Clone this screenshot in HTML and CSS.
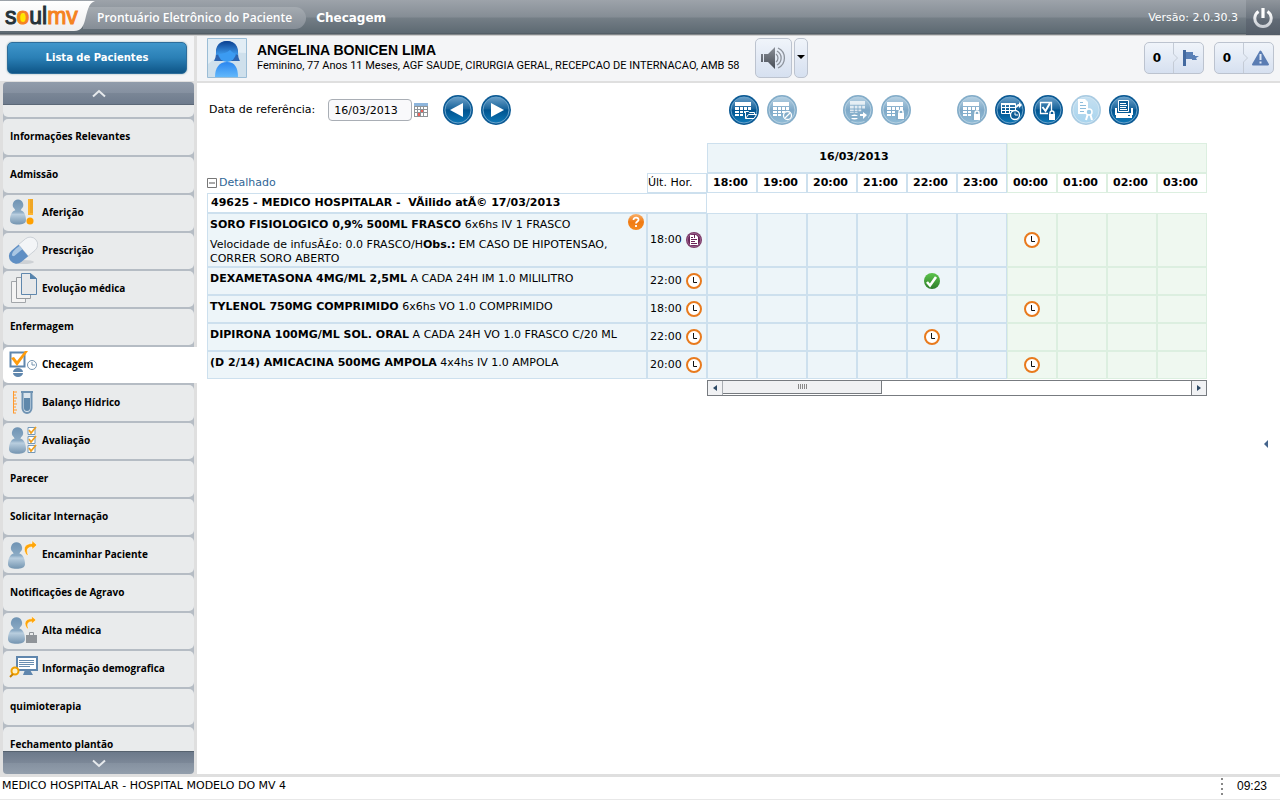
FILE: index.html
```html
<!DOCTYPE html>
<html lang="pt-BR">
<head>
<meta charset="utf-8">
<title>Prontuário Eletrônico do Paciente - Checagem</title>
<link rel="stylesheet" href="styles.css">
</head>
<body>
<svg class="defs" width="0" height="0" aria-hidden="true">
  <defs>
    <linearGradient id="gBlue" x1="0" y1="0" x2="0" y2="1"><stop offset="0" stop-color="#6a9fc8"/><stop offset=".45" stop-color="#1a659c"/><stop offset=".5" stop-color="#00538f"/><stop offset="1" stop-color="#0d77b6"/></linearGradient>
    <linearGradient id="gPale" x1="0" y1="0" x2="0" y2="1"><stop offset="0" stop-color="#b5d0e2"/><stop offset=".5" stop-color="#7fa9c8"/><stop offset="1" stop-color="#8fbbd6"/></linearGradient>
    <linearGradient id="gSky" x1="0" y1="0" x2="0" y2="1"><stop offset="0" stop-color="#c4dff0"/><stop offset="1" stop-color="#a8d4ee"/></linearGradient>
    <linearGradient id="gMan" x1="0" y1="0" x2="0" y2="1"><stop offset="0" stop-color="#6f93b3"/><stop offset=".5" stop-color="#8cabc5"/><stop offset=".6" stop-color="#b9cedf"/><stop offset="1" stop-color="#7394b0"/></linearGradient>
    <linearGradient id="gHair" x1="0" y1="0" x2="0" y2="1"><stop offset="0" stop-color="#0a3f8f"/><stop offset="1" stop-color="#3e9df0"/></linearGradient>
    <linearGradient id="gBust" x1="0" y1="0" x2="0" y2="1"><stop offset="0" stop-color="#2a86f0"/><stop offset="1" stop-color="#62b8fb"/></linearGradient>
    <linearGradient id="gGreen" x1="0" y1="0" x2="0" y2="1"><stop offset="0" stop-color="#5cc44c"/><stop offset="1" stop-color="#2f7d2b"/></linearGradient>
    <linearGradient id="gOrange" x1="0" y1="0" x2="0" y2="1"><stop offset="0" stop-color="#f9b06b"/><stop offset=".5" stop-color="#f07a12"/><stop offset="1" stop-color="#f58a1f"/></linearGradient>
    <linearGradient id="gMetal" x1="0" y1="0" x2="0" y2="1"><stop offset="0" stop-color="#fff"/><stop offset="1" stop-color="#c9cdd3"/></linearGradient>
    <linearGradient id="gSpeaker" x1="0" y1="0" x2="0" y2="1"><stop offset="0" stop-color="#8b9098"/><stop offset="1" stop-color="#474d56"/></linearGradient>
    <linearGradient id="gLogo" x1="0" y1="0" x2="0" y2="1"><stop offset="0" stop-color="#fff"/><stop offset="1" stop-color="#eeeeef"/></linearGradient>
    <symbol id="disc" viewBox="0 0 30 30"><circle cx="15" cy="15" r="15" fill="#0c5a94"/><circle cx="15" cy="15" r="13" fill="url(#gBlue)" stroke="#6aa3cb" stroke-width="1"/></symbol>
    <symbol id="discPale" viewBox="0 0 30 30"><circle cx="15" cy="15" r="15" fill="#84adc9"/><circle cx="15" cy="15" r="13" fill="url(#gPale)" stroke="#b5d0e2" stroke-width="1"/></symbol>
    <symbol id="discSky" viewBox="0 0 30 30"><circle cx="15" cy="15" r="15" fill="#a9cbe2"/><circle cx="15" cy="15" r="13" fill="url(#gSky)" stroke="#cfe5f3" stroke-width="1"/></symbol>
    <symbol id="grid" viewBox="0 0 18 16"><path fill="#fff" d="M1 1h16v4H1zM1 6h4v3H1zM6 6h3v3H6zM10 6h3v3h-3zM14 6h3v3h-3zM1 10h4v2H1zM6 10h3v2H6zM10 10h3v2h-3zM1 13h4v2H1zM6 13h3v2H6z"/></symbol>
    <symbol id="lock" viewBox="0 0 8 10"><path d="M2 5V3a2 2 0 0 1 4 0v2" fill="none" stroke="#fff" stroke-width="1.4"/><path fill="#fff" d="M1 4h6v6H1z"/></symbol>
    <symbol id="clock" viewBox="0 0 16 16"><circle cx="8" cy="8" r="7" fill="#fff" stroke="#e87a1d" stroke-width="2"/><path d="M7.500 4v5.500H11" fill="none" stroke="#111" stroke-width="1"/></symbol>
    <symbol id="check" viewBox="0 0 16 16"><circle cx="8" cy="8" r="8" fill="url(#gGreen)"/><path d="M3 9l3 3.500L12 4" fill="none" stroke="#fff" stroke-width="2.600"/></symbol>
    <symbol id="note" viewBox="0 0 16 16"><circle cx="8" cy="8" r="8" fill="#7c3a68"/><circle cx="8" cy="8" r="6.500" fill="#6b2458" stroke="#a878a0" stroke-width=".7"/><path fill="#fff" d="M4 3h6l2 2v8H4z"/><path stroke="#6b2458" d="M5 5.500h2M5 7.500h6M5 9.500h4M5 11.500h6M8.500 3v3"/></symbol>
    <symbol id="man" viewBox="0 0 18 28"><path fill="url(#gMan)" d="M9 0a6 6 0 0 1 4 10.400L12 12c4 1 6 6 6 11 0 4-4 5-9 5s-9-1-9-5c0-5 2-10 6-11l-1-1.600A6 6 0 0 1 9 0z"/></symbol>
    <symbol id="turn" viewBox="0 0 14 16"><path d="M4 15C-1 9 1 3 9 3V0l5 4.500L9 9V6.500C5 6.500 3 9 5 14z" fill="#ffa60a" stroke="#fff" stroke-width=".6"/></symbol>
    <symbol id="tick" viewBox="0 0 10 9"><path d="M1 1.500h7v7H1z" fill="#fff" stroke="#7398b8"/><path d="M2 4l2 3 5-6" fill="none" stroke="#f0a020" stroke-width="1.700"/></symbol>
  </defs>
</svg>

<header class="topbar">
  <svg class="logo" width="97" height="32" viewBox="0 0 97 32" role="img" aria-label="soulmv">
    <path d="M0 1h95c-6 2-7 8-9 15-2 9-4 15-12 15H0z" fill="url(#gLogo)"/>
    <circle cx="22" cy="18" r="5" fill="#ffe600"/>
    <text class="logo-text" x="5" y="24"><tspan class="ink">s</tspan><tspan class="sun">o</tspan><tspan class="ink">ul</tspan><tspan class="sun">mv</tspan></text>
  </svg>
  <span class="product">Prontuário Eletrônico do Paciente</span>
  <h1 class="screen-name">Checagem</h1>
  <span class="version">Versão: 2.0.30.3</span>
  <button class="power" type="button" aria-label="Sair">
    <svg width="22" height="22" viewBox="0 0 22 22"><path d="M6.500 4.500a8.200 8.200 0 1 0 9 0" fill="none" stroke="url(#gMetal)" stroke-width="3"/><path d="M11 1v10" stroke="#fff" stroke-width="3.200"/></svg>
  </button>
</header>

<div class="workspace">
  <aside class="sidebar">
    <div class="patients"><button class="patients-btn" type="button">Lista de Pacientes</button></div>
    <button class="scroller up" type="button" aria-label="Subir"><svg width="14" height="9" viewBox="0 0 14 9"><path d="M1 7.500L7 2l6 5.500" fill="none" stroke="#e6e9ec" stroke-width="2"/></svg></button>
    <nav class="menu">
      <ul>
        <li class="cut"><span></span></li>
        <li><a href="#">Informações Relevantes</a></li>
        <li><a href="#">Admissão</a></li>
        <li><a class="ic" href="#"><svg width="30" height="30" viewBox="0 0 30 30"><use href="#man" x="2" y="2" width="16" height="26"/><path d="M20 2h5v16h-5z" fill="#ffb52e"/><path d="M22 3h3M22 5h3M22 7h3M22 9h3M22 11h3M22 13h3M22 15h3" stroke="#e0981f"/><circle cx="22" cy="24" r="3.500" fill="#ffa000"/></svg>Aferição</a></li>
        <li><a class="ic" href="#"><svg width="30" height="30" viewBox="0 0 30 30"><ellipse cx="15" cy="27" rx="11" ry="2" fill="#cdd1d5"/><g transform="rotate(-40 15 15)"><path d="M15 8h9a7.500 7.500 0 0 1 0 15h-9z" fill="#f3f5f7" stroke="#b9c0c8" stroke-width=".6"/><path d="M15 8H6a7.500 7.500 0 0 0 0 15h9z" fill="#5f8fc4"/><path d="M3 12c3-3 7-2.500 12-2.500V14H4z" fill="#a9c6e3"/></g></svg>Prescrição</a></li>
        <li><a class="ic" href="#"><svg width="30" height="32" viewBox="0 0 30 32"><path d="M3.500 9.500h14v21h-14z" fill="#f4f4f4" stroke="#a2a6aa"/><path d="M8.500 5.500h14v21h-14z" fill="#f0f0f0" stroke="#969a9e"/><path d="M13.500 1.500h9l6 5v16h-15z" fill="#e6e8ea" stroke="#5f87ad"/><path d="M22 1l7 6h-7z" fill="#5583ac"/></svg>Evolução médica</a></li>
        <li><a href="#">Enfermagem</a></li>
        <li class="active"><a class="ic" href="#" aria-current="page"><svg width="30" height="30" viewBox="0 0 30 30"><path d="M2.500 3.500h14v14h-14z" fill="#fff" stroke="#5f86ad" stroke-width="2"/><path d="M3 9l3-1 3 4 8-10 3 0L9 17z" fill="#ff9c0c"/><path d="M5 23h10a5 4 0 0 0-10 0zM5 24h10a5 4 0 0 1-10 0z" fill="#5f86ad"/><circle cx="24" cy="16" r="4.500" fill="#fff" stroke="#7594b0"/><path d="M24 13v3h3" fill="none" stroke="#7594b0"/></svg>Checagem</a></li>
        <li><a class="ic" href="#"><svg width="30" height="30" viewBox="0 0 30 30"><path d="M5.500 4v22M5 5h4M5 8h3M5 11h4M5 14h3M5 17h4M5 20h3M5 23h4M5 26h3" stroke="#ff9a2e" fill="none"/><path d="M13 5h12M14.500 5v16a4.500 5 0 0 0 9 0V5" fill="#dce6ee" stroke="#6f93b3" stroke-width="2"/><path d="M16 11h6v10a3 3 0 0 1-6 0z" fill="#5f88ab"/></svg>Balanço Hídrico</a></li>
        <li><a class="ic" href="#"><svg width="30" height="30" viewBox="0 0 30 30"><use href="#man" x="1" y="2" width="17" height="27"/><use href="#tick" x="19" y="1" width="10" height="9"/><use href="#tick" x="19" y="10" width="10" height="9"/><use href="#tick" x="19" y="19" width="10" height="9"/></svg>Avaliação</a></li>
        <li><a href="#">Parecer</a></li>
        <li><a href="#">Solicitar Internação</a></li>
        <li><a class="ic" href="#"><svg width="30" height="30" viewBox="0 0 30 30"><use href="#man" x="0" y="3" width="17" height="27"/><use href="#turn" x="15" y="1" width="14" height="17"/></svg>Encaminhar Paciente</a></li>
        <li><a href="#">Notificações de Agravo</a></li>
        <li><a class="ic" href="#"><svg width="30" height="30" viewBox="0 0 30 30"><use href="#man" x="0" y="2" width="17" height="27"/><use href="#turn" x="16" y="1" width="12" height="14"/><path d="M18 20h11v8H18z" fill="#8f9499"/><path d="M21.500 20v-2.500h4V20" fill="none" stroke="#8f9499"/></svg>Alta médica</a></li>
        <li><a class="ic" href="#"><svg width="30" height="30" viewBox="0 0 30 30"><path d="M9 4h20v13H9z" fill="#fff" stroke="#5f86ad" stroke-width="2"/><path d="M11 7.500h15M11 9.500h15M11 11.500h15M11 13.500h11" stroke="#6a8eb0"/><path d="M17 17h5l3 5h-10z" fill="#5f86ad"/><circle cx="7" cy="18" r="3.500" fill="#fff2c8" stroke="#f0a000" stroke-width="2"/><path d="M5 21l-3 3" stroke="#c98000" stroke-width="2"/></svg>Informação demografica</a></li>
        <li><a href="#">quimioterapia</a></li>
        <li><a href="#">Fechamento plantão</a></li>
      </ul>
    </nav>
    <button class="scroller down" type="button" aria-label="Descer"><svg width="14" height="9" viewBox="0 0 14 9"><path d="M1 1.500L7 7l6-5.500" fill="none" stroke="#e6e9ec" stroke-width="2"/></svg></button>
  </aside>

  <main class="main">
    <section class="patient">
      <svg class="avatar" width="40" height="40" viewBox="0 0 40 40"><path d="M.5.500h39v39H.5z" fill="#cfe0ec" stroke="#9bbdd6"/><path d="M1 1h38v14Q16 12 1 26z" fill="#e2edf5"/><path d="M20 3c8 0 11 5 11 11 0 5 1 7 2 9H7c1-2 2-4 2-9C9 8 12 3 20 3z" fill="#2c64b0"/><circle cx="20" cy="15" r="9" fill="#3b9bf2"/><path d="M9 17c0-9 4-14 11-14s11 5 11 14c-4-1-6-3-8-5-3 3-9 4-14 5z" fill="url(#gHair)"/><path d="M8 39c0-9 4-15 12-15s11 6 11 15z" fill="url(#gBust)"/></svg>
      <div class="who">
        <h2>ANGELINA BONICEN LIMA</h2>
        <p>Feminino, 77 Anos 11 Meses, AGF SAUDE, CIRURGIA GERAL, RECEPCAO DE INTERNACAO, AMB 58</p>
      </div>
      <div class="sound">
        <button class="soft speaker" type="button" aria-label="Som"><svg width="28" height="26" viewBox="0 0 28 26"><path d="M2 9h2v8H2zM5 9h4l7-7v22l-7-7H5z" fill="url(#gSpeaker)"/><path d="M17 9a5 5 0 0 1 0 8M18 6a8 8 0 0 1 0 14M19 3a11 11 0 0 1 0 20" fill="none" stroke="#8d939c" stroke-width="1.300"/></svg></button>
        <button class="soft more" type="button" aria-label="Opções de som"><svg width="8" height="5" viewBox="0 0 8 5"><path d="M0 0h8L4 4z"/></svg></button>
      </div>
      <div class="alerts">
        <button class="soft counter" type="button" aria-label="Marcadores"><span>0</span><svg width="30" height="32" viewBox="0 0 30 32"><path d="M.5 0v12l4 4-4 4v12" fill="none" stroke="#c4cbd6"/><path d="M10 8h3v16h-3z" fill="#43699f"/><path d="M13 10h7v3h2v1h4l-3 2 1 2h-5v-1h-6z" fill="#5a80b6"/></svg></button>
        <button class="soft counter" type="button" aria-label="Alertas"><span>0</span><svg width="30" height="32" viewBox="0 0 30 32"><path d="M.5 0v12l4 4-4 4v12" fill="none" stroke="#c4cbd6"/><path d="M17.500 9.500l7.500 13H10z" fill="#5b7db3" stroke="#5b7db3" stroke-width="2" stroke-linejoin="round"/><path d="M17.500 12v6M17.500 19.500v2" stroke="#dfe8f5" stroke-width="2"/></svg></button>
      </div>
    </section>

    <div class="board">
      <div class="content">
        <div class="toolbar">
          <label for="ref-date">Data de referência:</label>
          <input id="ref-date" type="text" value="16/03/2013">
          <button class="plain cal" type="button" aria-label="Calendário"><svg width="14" height="14" viewBox="0 0 14 14"><path d="M0 0h14v14H0z" fill="#8f9497"/><path d="M0 0h14v3H0z" fill="#8db5dc"/><path d="M1 4h2v2H1zM4 4h2v2H4zM7 4h2v2H7zM10 4h3v2h-3zM1 7h2v2H1zM4 7h2v2H4zM10 7h3v2h-3zM1 10h2v3H1zM7 10h2v3H7zM10 10h3v3h-3z" fill="#fff"/><path d="M7 7h2v2H7zM4 10h2v3H4z" fill="#f0605a"/></svg></button>
          <div class="days">
            <button class="plain" type="button" aria-label="Dia anterior"><svg width="30" height="30"><use href="#disc"/><path d="M7 15l13-7v14z" fill="#fff"/></svg></button>
            <button class="plain" type="button" aria-label="Próximo dia"><svg width="30" height="30"><use href="#disc"/><path d="M23 15L10 8v14z" fill="#fff"/></svg></button>
          </div>
          <div class="tools">
            <div class="tool-group">
              <button class="plain" type="button" aria-label="Abrir"><svg width="30" height="30"><use href="#disc"/><use href="#grid" x="5" y="6" width="18" height="16"/><path d="M16.500 23.500v-7h3l1 1h5v2M16.500 23.500l3-4h8l-2.500 4z" fill="#0c5a94" stroke="#fff"/></svg></button>
              <button class="plain" type="button" aria-label="Suspender"><svg width="30" height="30"><use href="#discPale"/><use href="#grid" x="5" y="6" width="18" height="16"/><circle cx="20.500" cy="20.500" r="4" fill="#84adc9" stroke="#fff" stroke-width="1.300"/><path d="M18 23l5-5" stroke="#fff" stroke-width="1.300"/></svg></button>
            </div>
            <div class="tool-group">
              <button class="plain" type="button" aria-label="Transferir"><svg width="30" height="30"><use href="#discPale"/><use href="#grid" x="6" y="5" width="17" height="15" opacity=".75"/><path d="M7 18h18v8H7z" fill="#86afcb"/><path d="M8 21a4 3 0 0 1 7 0zM8 23h7a4 3 0 0 1-7 0z" fill="#fff"/><path d="M17 19h3v-2l4 3-4 4v-3h-3z" fill="#fff"/></svg></button>
              <button class="plain" type="button" aria-label="Bloquear"><svg width="30" height="30"><use href="#discPale"/><use href="#grid" x="5" y="6" width="18" height="16"/><path d="M15 15h9v10h-9z" fill="#84adc9"/><use href="#lock" x="16" y="14" width="8" height="10"/></svg></button>
            </div>
            <div class="tool-group">
              <button class="plain" type="button" aria-label="Fechar grade"><svg width="30" height="30"><use href="#discPale"/><use href="#grid" x="5" y="6" width="18" height="16"/><path d="M15 15h9v10h-9z" fill="#84adc9"/><use href="#lock" x="16" y="15" width="8" height="10"/></svg></button>
              <button class="plain" type="button" aria-label="Aprazar"><svg width="30" height="30"><use href="#disc"/><path d="M6.500 8.500h14v10h-14zM6 12.500h14M6 15.500h14M10.500 10v9M14.500 10v9" fill="none" stroke="#fff"/><path d="M6 8h14v2H6z" fill="#fff"/><path d="M21 13c0-3 1-4 3-4V7l3 3-3 3v-2z" fill="#fff"/><circle cx="20" cy="20" r="4.500" fill="#0c5a94" stroke="#fff" stroke-width="1.300"/><path d="M20 17.500V20h3" fill="none" stroke="#fff"/></svg></button>
              <button class="plain" type="button" aria-label="Checar"><svg width="30" height="30"><use href="#disc"/><path d="M7.500 7.500h11v11h-11z" fill="none" stroke="#fff" stroke-width="1.300"/><path d="M9.500 12l3 4L17 8" fill="none" stroke="#fff" stroke-width="2"/><path d="M15 16h8v9h-8z" fill="#0a5c97"/><use href="#lock" x="15" y="15" width="8" height="10"/></svg></button>
              <button class="plain" type="button" aria-label="Assinar"><svg width="30" height="30"><use href="#discSky"/><path d="M7 4h7l3 3v12H7z" fill="#fff"/><path d="M9 7.500h3M9 10.500h6M9 13.500h6M9 16.500h4" stroke="#8dbddc"/><circle cx="18" cy="17" r="3" fill="#9ccbe6" stroke="#fff" stroke-width="1.500"/><path d="M16.500 20l-1.500 5M19.500 20l1.500 5" stroke="#fff" stroke-width="2"/></svg></button>
              <button class="plain" type="button" aria-label="Imprimir"><svg width="30" height="30"><use href="#disc"/><path d="M7 13v6h16v-6" fill="none" stroke="#fff" stroke-width="2"/><path d="M9.500 5.500h10v11h-10z" fill="#0c5a94" stroke="#fff"/><path d="M11 8.500h6M11 10.500h7M11 12.500h6M11 14.500h7" stroke="#fff"/><path d="M7 18h16v5H7z" fill="#fff"/><path d="M19 20.500h2" stroke="#0c5a94"/></svg></button>
            </div>
          </div>
        </div>

        <table class="grid">
          <colgroup><col class="c-item"><col class="c-last"><col span="10" class="c-hour"></colgroup>
          <thead>
            <tr class="r-date"><td class="bare" colspan="2"></td><th class="day" colspan="6">16/03/2013</th><td class="next" colspan="4"></td></tr>
            <tr class="r-hours">
              <td class="bare"><button class="plain detail" type="button"><svg width="10" height="10" viewBox="0 0 10 10"><path d="M.5.500h9v9h-9z" fill="#fff" stroke="#777"/><path d="M2 5h6" stroke="#555" stroke-width="1"/></svg>Detalhado</button></td>
              <th class="last">Últ. Hor.</th>
              <th>18:00</th><th>19:00</th><th>20:00</th><th>21:00</th><th>22:00</th><th>23:00</th><th class="n">00:00</th><th class="n">01:00</th><th class="n">02:00</th><th class="n">03:00</th>
            </tr>
          </thead>
          <tbody>
            <tr class="r-group"><th colspan="2">49625 - MEDICO HOSPITALAR -&nbsp; VÃilido atÃ© 17/03/2013</th><td class="bare" colspan="10"></td></tr>
            <tr>
              <td class="item"><svg class="help" width="16" height="16" viewBox="0 0 16 16"><circle cx="8" cy="8" r="8" fill="url(#gOrange)"/><path d="M5.500 6c0-3.500 5.500-3 5 0-.3 1.500-2.500 1.500-2.500 3.500M8 11v2" fill="none" stroke="#fff" stroke-width="1.800"/></svg><p class="first"><b>SORO FISIOLOGICO 0,9% 500ML FRASCO</b> 6x6hs IV 1 FRASCO</p><p>Velocidade de infusÃ£o: 0.0 FRASCO/H<b>Obs.:</b> EM CASO DE HIPOTENSAO, CORRER SORO ABERTO</p></td>
              <td class="time"><div>18:00<svg width="16" height="16"><use href="#note"/></svg></div></td>
              <td></td><td></td><td></td><td></td><td></td><td></td><td class="n"><svg width="16" height="16"><use href="#clock"/></svg></td><td class="n"></td><td class="n"></td><td class="n"></td>
            </tr>
            <tr>
              <td class="item"><b>DEXAMETASONA 4MG/ML 2,5ML</b> A CADA 24H IM 1.0 MILILITRO</td>
              <td class="time"><div>22:00<svg width="16" height="16"><use href="#clock"/></svg></div></td>
              <td></td><td></td><td></td><td></td><td><svg width="16" height="16"><use href="#check"/></svg></td><td></td><td class="n"></td><td class="n"></td><td class="n"></td><td class="n"></td>
            </tr>
            <tr>
              <td class="item"><b>TYLENOL 750MG COMPRIMIDO</b> 6x6hs VO 1.0 COMPRIMIDO</td>
              <td class="time"><div>18:00<svg width="16" height="16"><use href="#clock"/></svg></div></td>
              <td></td><td></td><td></td><td></td><td></td><td></td><td class="n"><svg width="16" height="16"><use href="#clock"/></svg></td><td class="n"></td><td class="n"></td><td class="n"></td>
            </tr>
            <tr>
              <td class="item"><b>DIPIRONA 100MG/ML SOL. ORAL</b> A CADA 24H VO 1.0 FRASCO C/20 ML</td>
              <td class="time"><div>22:00<svg width="16" height="16"><use href="#clock"/></svg></div></td>
              <td></td><td></td><td></td><td></td><td><svg width="16" height="16"><use href="#clock"/></svg></td><td></td><td class="n"></td><td class="n"></td><td class="n"></td><td class="n"></td>
            </tr>
            <tr>
              <td class="item"><b>(D 2/14) AMICACINA 500MG AMPOLA</b> 4x4hs IV 1.0 AMPOLA</td>
              <td class="time"><div>20:00<svg width="16" height="16"><use href="#clock"/></svg></div></td>
              <td></td><td></td><td></td><td></td><td></td><td></td><td class="n"><svg width="16" height="16"><use href="#clock"/></svg></td><td class="n"></td><td class="n"></td><td class="n"></td>
            </tr>
          </tbody>
        </table>
        <div class="hscroll">
          <button type="button" aria-label="Rolar para a esquerda"><svg width="4" height="6" viewBox="0 0 4 6"><path d="M4 0v6L0 3z" fill="#2d4a66"/></svg></button>
          <div class="track"><div class="thumb"><i></i><i></i><i></i><i></i><i></i></div></div>
          <button type="button" aria-label="Rolar para a direita"><svg width="4" height="6" viewBox="0 0 4 6"><path d="M0 0v6l4-3z" fill="#2d4a66"/></svg></button>
        </div>
      </div>
      <div class="edge"><button class="plain" type="button" aria-label="Abrir painel lateral"><svg width="4" height="8" viewBox="0 0 4 8"><path d="M4 0v8L0 4z" fill="#44648c"/></svg></button></div>
    </div>
  </main>
</div>

<footer class="status">
  <span>MEDICO HOSPITALAR - HOSPITAL MODELO DO MV 4</span>
  <svg class="grip" width="2" height="17" viewBox="0 0 2 17"><path d="M0 0h2v2H0zM0 5h2v2H0zM0 10h2v2H0zM0 15h2v2H0z" fill="#888"/></svg>
  <span class="time-now">09:23</span>
</footer>
</body>
</html>
```
FILE: styles.css
```css
* { box-sizing: border-box; }
body {
  margin: 0;
  min-height: 100vh;
  height: 100vh;
  display: flex;
  flex-direction: column;
  background: #fff;
  color: #000;
  font: 11px/14px "DejaVu Sans", Verdana, sans-serif;
}
h1, h2, p, ul { margin: 0; padding: 0; }
ul { list-style: none; }
button { font: inherit; color: inherit; cursor: pointer; }
svg { display: block; flex: none; }
.defs { position: absolute; }
.plain { border: 0; background: none; padding: 0; }

.topbar {
  display: flex;
  align-items: center;
  height: 36px;
  flex: none;
  color: #fff;
  background: linear-gradient(#9da3aa 0, #858d95 17px, #747e86 18px, #5d6972 33px, #4a545c 34px, #b8b8b8 35px, #e6e6e6 36px);
}
.logo { align-self: flex-start; z-index: 1; }
.logo-text { font: 23px "Liberation Sans", Arial, sans-serif; stroke-width: 1px; }
.ink { fill: #263238; stroke: #263238; }
.sun { fill: #f58220; stroke: #f58220; }
.product {
  margin-left: -14px;
  padding: 0 14px;
  height: 22px;
  border-radius: 0 11px 11px 0;
  background: linear-gradient(#a5abb1, #858d96);
  font: 600 12px/22px "Open Sans", sans-serif;
  white-space: nowrap;
}
.screen-name { margin-left: 10px; font-size: 12px; line-height: 14px; }
.version { margin-left: auto; }
.power {
  width: 34px;
  height: 35px;
  margin-left: 8px;
  align-self: flex-start;
  border: 0;
  padding: 0 0 0 6px;
  background: linear-gradient(#8f959c 0, #6c757f 18px, #626b76 19px, #545d68);
}

.workspace { flex: 1; min-height: 0; display: flex; background: #dfdfdf; padding-bottom: 3px; }
.sidebar { width: 197px; flex: none; display: flex; flex-direction: column; padding-left: 3px; }
.patients { margin: 0 3px 1px -3px; padding: 6px 7px 7px; background: #f4f5f7; height: 45px; }
.patients-btn {
  display: block;
  width: 100%;
  height: 32px;
  border: 1px solid #2d6d9b;
  border-radius: 5px;
  color: #fff;
  font-size: 10px;
  font-weight: bold;
  background: linear-gradient(#3f96cb, #2a7fb5 50%, #0e5587);
  box-shadow: 0 0 2px #8aa;
}
.scroller {
  display: flex;
  align-items: center;
  justify-content: center;
  height: 23px;
  flex: none;
  margin-right: 3px;
  border: 0;
  padding: 0;
}
.up { border-radius: 4px 4px 0 0; border-bottom: 1px solid #5c6877; background: linear-gradient(#909cab 0, #8590a0 50%, #7a8696 51%, #6e7b8d); }
.down { border-radius: 0 0 4px 4px; border-top: 1px solid #56626f; background: linear-gradient(#6c798a, #7c8898 50%, #8591a0 51%, #929eac); }
.menu { flex: 1; min-height: 0; overflow: hidden; }
.menu li { margin-right: 3px; padding-bottom: 2px; background: #b5bcc4; }
.menu a {
  display: flex;
  align-items: center;
  height: 36px;
  padding: 0 0 2px 7px;
  border-radius: 5px;
  background: #e9ebec;
  color: #000;
  font: bold 10px/14px "Open Sans", sans-serif;
  text-decoration: none;
}
.menu a.ic { padding-left: 5px; gap: 4px; }
.menu .cut span { display: block; height: 12px; border-radius: 0 0 5px 5px; background: #e9ebec; }
.menu .active a { margin-right: -3px; background: #fff; border-radius: 5px 0 0 5px; }

.main { flex: 1; min-width: 0; display: flex; flex-direction: column; background: #fff; }
.patient {
  display: flex;
  align-items: center;
  height: 47px;
  flex: none;
  padding: 0 6px 2px 10px;
  border-bottom: 2px solid #dfdfdf;
  background: #f4f5f7;
}
.who { margin-left: 10px; font-family: "Liberation Sans", Arial, sans-serif; white-space: nowrap; }
.who h2 { font-size: 14px; line-height: 16px; }
.who p { font: 11px/16px Roboto, Arial, sans-serif; }
.sound { display: flex; gap: 2px; margin-left: 15px; }
.soft {
  display: flex;
  align-items: center;
  justify-content: center;
  padding: 0;
  border: 1px solid #bcc3cf;
  border-radius: 5px;
  background: linear-gradient(#f0f4fa, #d6e0f0);
}
.speaker { width: 37px; height: 40px; }
.more { width: 14px; height: 40px; }
.alerts { display: flex; gap: 10px; margin-left: auto; }
.counter { width: 60px; height: 32px; font-size: 12px; font-weight: bold; overflow: hidden; }
.counter span { flex: 1; padding-right: 4px; }

.board { flex: 1; min-height: 0; display: flex; }
.content { flex: 1; min-width: 0; padding: 12px 0 0 10px; }
.edge { width: 73px; flex: none; display: flex; align-items: center; justify-content: flex-end; padding: 30px 12px 0 0; }

.toolbar { display: flex; align-items: center; padding-left: 2px; height: 30px; margin-bottom: 18px; }
.toolbar input {
  width: 84px;
  height: 22px;
  margin-left: 13px;
  padding: 0 5px;
  border: 1px solid #a9aeb5;
  border-radius: 4px;
  background: #f9f9fb;
  font: inherit;
}
.cal { margin-left: 2px; }
.days { display: flex; gap: 8px; margin-left: 15px; }
.tools { display: flex; gap: 46px; margin: 0 68px 0 auto; }
.tool-group { display: flex; gap: 8px; }

.grid { width: 100%; table-layout: fixed; border-collapse: separate; border-spacing: 0; }
.c-item { width: 44%; }
.c-last { width: 6%; }
.c-hour { width: 5%; }
.grid th, .grid td { border: 1px solid #cde0ee; padding: 0; height: 28px; }
.grid td { background: #edf5f9; }
.grid tbody td svg { margin: 0 auto; }
.grid .bare, .grid tbody .bare { border-color: transparent; background: none; }
.r-date .day { background: #edf5f9; }
.grid .r-date .day { padding: 0 6px 3px 0; }
.grid .r-date .day, .grid .r-date .bare, .grid .r-date .next { height: 30px; }
.grid .next, .grid .n { border-color: #dcefe0; }
.grid .next, .grid td.n { background: #eff8f0; }
.grid .r-hours th, .grid .r-hours td, .grid .r-group th, .grid .r-group td { height: 20px; }
.grid .r-hours th { padding-right: 3px; }
.grid .r-hours .last { font-weight: normal; text-align: left; padding: 0; }
.detail { display: flex; align-items: center; gap: 2px; color: #2f6596; }
.grid .r-hours .bare { border-width: 0; }
.grid .r-group th { text-align: left; padding-left: 3px; }
.grid .item { vertical-align: top; padding: 4px 2px 0; }
.item .first { margin-bottom: 6px; }
.grid .item .help { float: right; margin: -4px 0 0 4px; }
.time div { display: flex; align-items: center; justify-content: space-between; padding: 0 4px 0 2px; }
.grid .time svg { margin: 0; }

.hscroll { display: flex; width: 50%; height: 16px; margin: 1px 0 0 auto; border: 1px solid #777b80; background: #fff; }
.hscroll button { display: flex; align-items: center; justify-content: center; width: 15px; padding: 0; border: 0; background: #f1f2f4; }
.hscroll button:first-child { border-right: 1px solid #a9adb2; }
.hscroll button:last-child { border-left: 1px solid #777b80; }
.track { flex: 1; }
.thumb { display: flex; justify-content: center; gap: 1px; width: 34%; height: 13px; padding-top: 3px; border-right: 1px solid #777b80; border-bottom: 1px solid #777b80; background: #f0f1f3; }
.thumb i { width: 1px; height: 5px; background: #888; }

.status { display: flex; align-items: center; height: 23px; flex: none; padding: 0 13px 4px 2px; border-bottom: 1px solid #e8e8e8; }
.grip { margin-left: auto; }
.time-now { margin-left: 14px; font: 12px/17px "Liberation Sans", Arial, sans-serif; }
```
